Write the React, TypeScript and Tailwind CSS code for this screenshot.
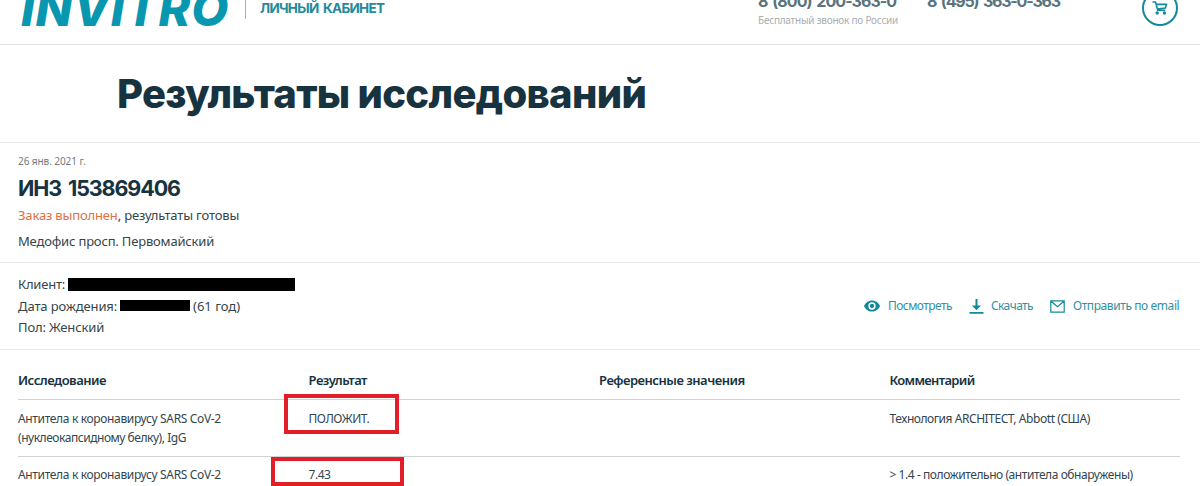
import React from 'react';

interface ResultRow {
  name: string[];
  result: string;
  reference: string;
  comment: string;
}

const rows: ResultRow[] = [
  {
    name: ['Антитела к коронавирусу SARS CoV-2', '(нуклеокапсидному белку), IgG'],
    result: 'ПОЛОЖИТ.',
    reference: '',
    comment: 'Технология ARCHITECT, Abbott (США)',
  },
  {
    name: ['Антитела к коронавирусу SARS CoV-2'],
    result: '7.43',
    reference: '',
    comment: '> 1.4 - положительно (антитела обнаружены)',
  },
];

const CartIcon = () => (
  <svg width="16" height="14" viewBox="0 0 16 14" fill="none" stroke="#14899b" strokeWidth="1.6">
    <path d="M0.5 1h3l2.2 8.2h7.6M4.2 3.4h10.2l-1 3.6-8.2 1" />
    <circle cx="5.2" cy="12" r="1.7" fill="#14899b" stroke="none" />
    <circle cx="12.4" cy="12" r="1.7" fill="#14899b" stroke="none" />
  </svg>
);

const EyeIcon = () => (
  <svg width="16" height="12" viewBox="0 0 16 12">
    <path d="M8 0.4C4.4 0.4 1.3 2.7 0 6c1.3 3.3 4.4 5.6 8 5.6s6.7-2.3 8-5.6C14.7 2.7 11.6 0.4 8 0.4z" fill="#14899b" />
    <circle cx="8" cy="6" r="2.9" fill="#14899b" stroke="#fff" strokeWidth="1.5" />
  </svg>
);

const DownloadIcon = () => (
  <svg width="15" height="15" viewBox="0 0 15 15" fill="#14899b">
    <path d="M6.5 0h2v6.6h3.6L7.5 11.2 2.9 6.6h3.6zM0.5 13h14v1.8h-14z" />
  </svg>
);

const MailIcon = () => (
  <svg width="15" height="13" viewBox="0 0 15 13" fill="none" stroke="#14899b" strokeWidth="1.2">
    <path d="M0.8 0.8h13.4v11.4H0.8zM1 1.2l6.5 5.6L14 1.2" />
  </svg>
);

const Header = () => (
  <header className="-mt-4 flex h-[61px] items-start border-b border-[#dfe2e3] pl-[21px]">
    <div className="mt-px w-[224px] text-[48px] leading-[48px] font-extrabold italic tracking-[0.8px] text-[#0997af] font-[Inter,sans-serif]">
      INVITRO
    </div>
    <div className="h-[35px] w-px bg-[#8fb9c2]" />
    <div className="ml-[14px] mt-[14px] w-[498px] text-[13.5px] leading-5 font-bold tracking-[-0.7px] [word-spacing:2px] text-[#24899c] font-[Inter,sans-serif]">
      ЛИЧНЫЙ КАБИНЕТ
    </div>
    <div className="mt-[6px] w-[169px]">
      <div className="text-[16px] leading-[22px] font-bold tracking-[-0.96px] [word-spacing:2px] text-[#5a747c] font-[Inter,sans-serif]">8 (800) 200-363-0</div>
      <div className="text-[10px] leading-4 tracking-[-0.23px] text-[#a9aeb0]">Бесплатный звонок по России</div>
    </div>
    <div className="mt-[6px] w-[215px] text-[16px] leading-[22px] font-bold tracking-[-1.2px] [word-spacing:2px] text-[#5a747c] font-[Inter,sans-serif]">
      8 (495) 363-0-363
    </div>
    <div className="mt-[6px] flex size-9 items-center justify-center rounded-full border-2 border-[#14899b]">
      <CartIcon />
    </div>
  </header>
);

const OrderInfo = () => (
  <section className="h-[120px] border-b border-[#e6e8e9] px-[18px] pt-[10px] text-[13px] leading-[26px] text-[#33454c]">
    <div className="text-[10px] leading-4 tracking-[-0.07px] text-[#70797d]">26 янв. 2021 г.</div>
    <h2 className="mt-[5px] mb-[-1px] text-[21.5px] leading-[29px] font-bold tracking-[-1.1px] [word-spacing:3px] text-[#17333f] font-[Inter,sans-serif]">ИНЗ 153869406</h2>
    <div className="tracking-[-0.16px]">
      <span className="text-[#e07040]">Заказ выполнен</span>, результаты готовы
    </div>
    <div className="tracking-[-0.18px]">Медофис просп. Первомайский</div>
  </section>
);

const ClientInfo = () => (
  <section className="flex h-[87px] items-start justify-between border-b border-[#e6e8e9] pl-[18px] pr-[21px] pt-[11px]">
    <div className="text-[13px] leading-[21.5px] tracking-[-0.15px] text-[#33454c]">
      <div className="flex">
        <span className="w-[50px] tracking-[-0.21px]">Клиент:</span>
        <span className="mt-[4px] h-[13px] w-[227px] bg-black" />
      </div>
      <div className="flex">
        <span className="w-[102px] tracking-[-0.1px]">Дата рождения:</span>
        <span className="mt-[4px] h-[11px] w-[70px] bg-black" />
        <span className="ml-[3px] tracking-normal">(61 год)</span>
      </div>
      <div>Пол: Женский</div>
    </div>
    <div className="mt-[22px] flex h-5 items-center text-[12px] leading-5 text-[#3391a1]">
      <EyeIcon />
      <span className="ml-2 w-[81px] tracking-[-0.55px]">Посмотреть</span>
      <DownloadIcon />
      <span className="ml-[7px] w-[59px] tracking-[-0.6px]">Скачать</span>
      <MailIcon />
      <span className="ml-[8px] w-[106px] whitespace-nowrap tracking-[-0.42px]">Отправить по email</span>
    </div>
  </section>
);

const ResultsTable = () => (
  <section className="relative pl-[18px] pr-5">
    <div className="grid h-[50px] grid-cols-4 border-b border-[#cfd4d6] pt-5 text-[13px] leading-5 font-semibold tracking-[-0.5px] text-[#17333f]">
      <div>Исследование</div>
      <div>Результат</div>
      <div>Референсные значения</div>
      <div className="tracking-[-0.66px]">Комментарий</div>
    </div>
    {rows.map((row, i) => (
      <div
        key={i}
        className="grid h-[57px] grid-cols-4 border-b border-[#cfd4d6] pt-[9px] nth-[3]:pt-[8px] text-[12px] leading-[19px] tracking-[-0.44px] text-[#33454c]"
      >
        <div className="tracking-[-0.34px]">
          {row.name.map((line) => <div key={line} className="last:not-first:tracking-[-0.46px]">{line}</div>)}
        </div>
        <div>{row.result}</div>
        <div>{row.reference}</div>
        <div>{row.comment}</div>
      </div>
    ))}
    {/* Highlight frames around the results */}
    <div className="absolute left-[284px] top-[44px] h-[40px] w-[115px] border-4 border-[#e01f26]" />
    <div className="absolute left-[271px] top-[107px] h-[29px] w-[133px] border-4 border-[#e01f26]" />
  </section>
);

const App: React.FC = () => {
  return (
    <div className="h-[486px] w-[1200px] overflow-hidden bg-white font-['Noto_Sans',sans-serif]">
      <Header />
      <section className="h-[98px] border-b border-[#e6e8e9] pl-[117px] pt-[25px]">
        <h1 className="text-[40px] leading-[48px] font-extrabold tracking-[-0.69px] text-[#17333f] font-[Inter,sans-serif]">
          Результаты исследований
        </h1>
      </section>
      <OrderInfo />
      <ClientInfo />
      <ResultsTable />
    </div>
  );
};

export default App;
